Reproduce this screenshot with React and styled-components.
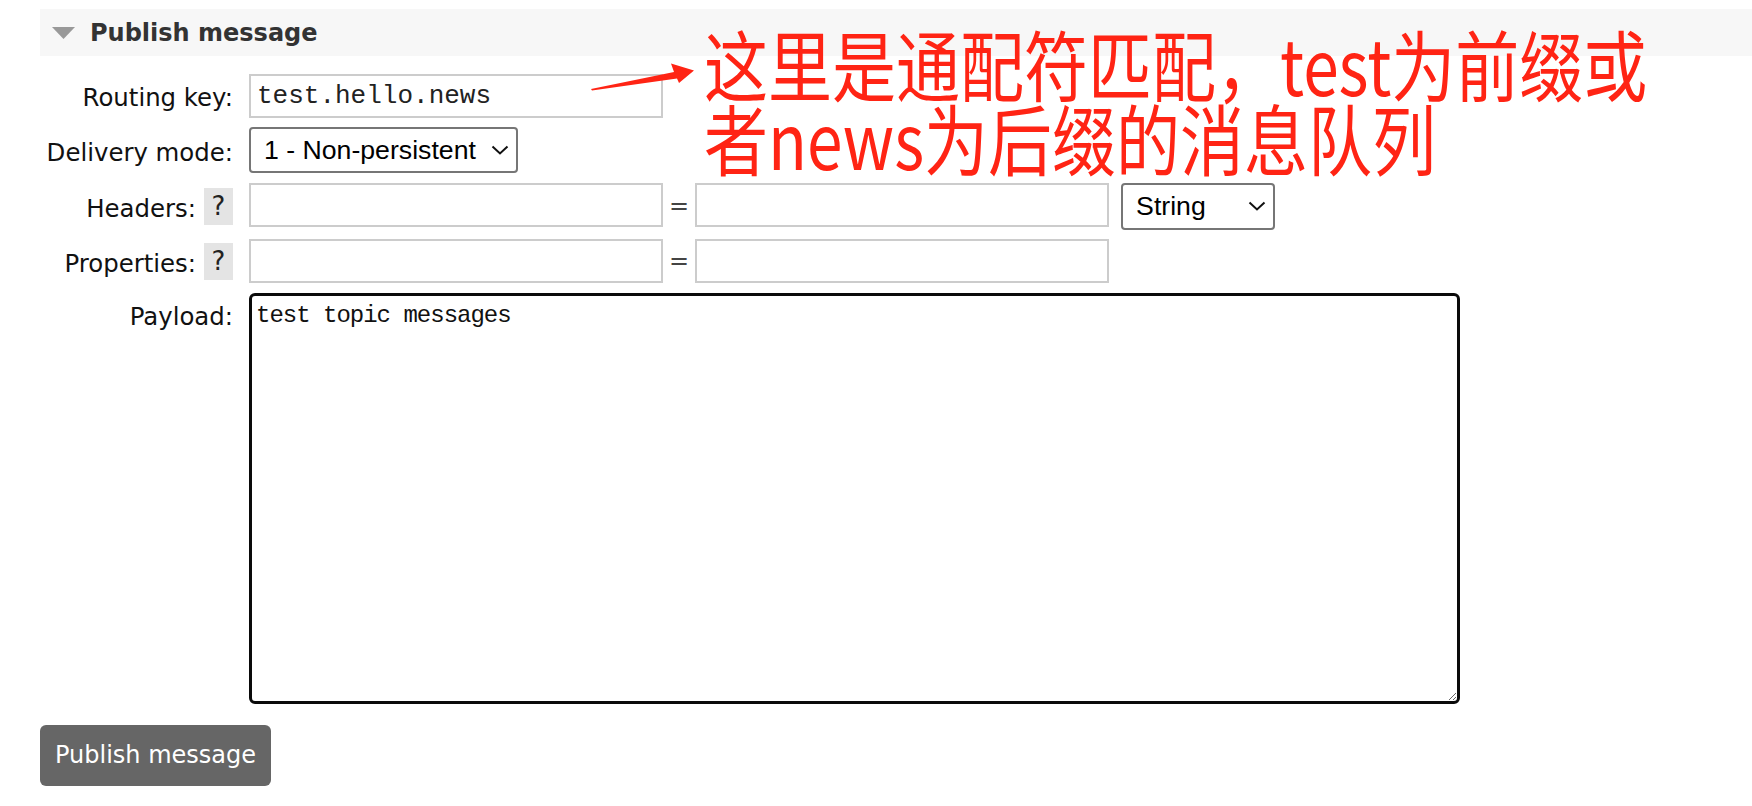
import React from "react";
import styled, { createGlobalStyle } from "styled-components";

const GlobalStyle = createGlobalStyle`
  html, body { margin: 0; padding: 0; background: #fff; }
  body { font-family: "DejaVu Sans", Verdana, sans-serif; color: #111; }
  * { box-sizing: border-box; }
`;

const Page = styled.div`
  position: relative;
  padding: 9px 0 0 40px;
`;

const SectionHeader = styled.div`
  display: flex;
  align-items: center;
  gap: 15px;
  height: 47px;
  padding-left: 12px;
  background: #f7f7f7;
`;

const Title = styled.h2`
  margin: 0;
  font-family: "DejaVu Sans", Verdana, sans-serif;
  font-size: 24px;
  font-weight: bold;
  color: #333;
`;

const Form = styled.div`
  display: grid;
  grid-template-columns: 193px 1fr;
  column-gap: 16px;
  row-gap: 9.5px;
  margin-top: 17.5px;
  align-items: center;
`;

const Label = styled.div`
  justify-self: end;
  align-self: ${(p) => (p.$top ? "start" : "center")};
  display: flex;
  align-items: center;
  gap: 8px;
  padding-top: ${(p) => (p.$top ? "10px" : "5px")};
  font-size: 24.4px;
  line-height: 28px;
  color: #111;
  white-space: nowrap;
`;

const HelpBox = styled.span`
  display: inline-flex;
  align-items: center;
  justify-content: center;
  width: 29px;
  height: 37px;
  margin-top: -5px;
  background: #e4e4e4;
  color: #222;
  font-size: 26px;
`;

const FieldRow = styled.div`
  display: flex;
  align-items: flex-start;
`;

const TextInput = styled.input`
  width: 414px;
  height: 44px;
  border: 2px solid #ccc;
  padding: 0 6px;
  font-family: "Liberation Mono", "DejaVu Sans Mono", monospace;
  font-size: 26px;
  color: #222;
  background: #fff;
  outline: none;
`;

const Equals = styled.span`
  align-self: center;
  margin: 0 6px;
  font-size: 24px;
  color: #444;
`;

const SelectWrap = styled.div`
  position: relative;
  display: inline-flex;
  margin-left: ${(p) => p.$ml || 0}px;
`;

const Select = styled.select`
  appearance: none;
  -webkit-appearance: none;
  width: ${(p) => p.$w}px;
  height: ${(p) => p.$h}px;
  border: 2px solid #767676;
  border-radius: 4px;
  padding: 0 0 0 13px;
  background: #fff;
  color: #000;
  font-family: "Liberation Sans", Arial, sans-serif;
  font-size: 26.67px;
  outline: none;
`;

const Chevron = styled.svg`
  position: absolute;
  right: 9px;
  top: 50%;
  transform: translateY(-50%);
  pointer-events: none;
`;

const Payload = styled.textarea`
  width: 1211px;
  height: 411px;
  border: 3px solid #0a0a0a;
  border-radius: 6px;
  padding: 6px 4px;
  font-family: "Liberation Mono", "DejaVu Sans Mono", monospace;
  font-size: 24px;
  letter-spacing: -1px;
  color: #111;
  outline: none;
  resize: both;
`;

const PublishButton = styled.button`
  display: block;
  margin-top: 21px;
  height: 61px;
  padding: 0 15px;
  border: none;
  border-radius: 6px;
  background: #666;
  color: #fff;
  font-family: "DejaVu Sans", Verdana, sans-serif;
  font-size: 24px;
  cursor: pointer;
`;

const Annotation = styled.div`
  position: absolute;
  left: 704px;
  top: 25px;
  font-family: "Noto Sans CJK SC", "Noto Sans", sans-serif;
  font-size: 64px;
  line-height: 62px;
  color: #ff2414;
  white-space: nowrap;
  transform: scaleY(1.2);
  transform-origin: top left;
`;

const AnnoLine = styled.span`
  display: block;
`;

const Arrow = styled.svg`
  position: absolute;
  left: 585px;
  top: 60px;
`;

const ChevronIcon = () => (
  <Chevron width="18" height="10" viewBox="0 0 18 10">
    <path d="M1.5 1.5 L9 8.5 L16.5 1.5" fill="none" stroke="#111" strokeWidth="2" />
  </Chevron>
);

export default function App() {
  return (
    <>
      <GlobalStyle />
      <Page>
        <SectionHeader>
          <svg width="23" height="12" viewBox="0 0 23 12">
            <polygon points="0,0 23,0 11.5,12" fill="#999" />
          </svg>
          <Title>Publish message</Title>
        </SectionHeader>

        <Form>
          <Label>Routing key:</Label>
          <FieldRow>
            <TextInput type="text" defaultValue="test.hello.news" />
          </FieldRow>

          <Label>Delivery mode:</Label>
          <FieldRow>
            <SelectWrap>
              <Select $w={269} $h={46} defaultValue="1">
                <option value="1">1 - Non-persistent</option>
                <option value="2">2 - Persistent</option>
              </Select>
              <ChevronIcon />
            </SelectWrap>
          </FieldRow>

          <Label>
            Headers:<HelpBox>?</HelpBox>
          </Label>
          <FieldRow>
            <TextInput type="text" />
            <Equals>=</Equals>
            <TextInput type="text" />
            <SelectWrap $ml={12}>
              <Select $w={154} $h={47} defaultValue="string">
                <option value="string">String</option>
                <option value="number">Number</option>
                <option value="boolean">Boolean</option>
              </Select>
              <ChevronIcon />
            </SelectWrap>
          </FieldRow>

          <Label>
            Properties:<HelpBox>?</HelpBox>
          </Label>
          <FieldRow>
            <TextInput type="text" />
            <Equals>=</Equals>
            <TextInput type="text" />
          </FieldRow>

          <Label $top>Payload:</Label>
          <FieldRow>
            <Payload defaultValue="test topic messages" />
          </FieldRow>
        </Form>

        <PublishButton>Publish message</PublishButton>

        <Arrow width="115" height="35" viewBox="0 0 115 35">
          <polygon
            points="6,29 89,12 86,3.5 109,10.5 94,23 92,18.5 7,30.5"
            fill="#ff2414"
          />
        </Arrow>
        <Annotation>
          <AnnoLine>这里是通配符匹配，test为前缀或</AnnoLine>
          <AnnoLine>者news为后缀的消息队列</AnnoLine>
        </Annotation>
      </Page>
    </>
  );
}
